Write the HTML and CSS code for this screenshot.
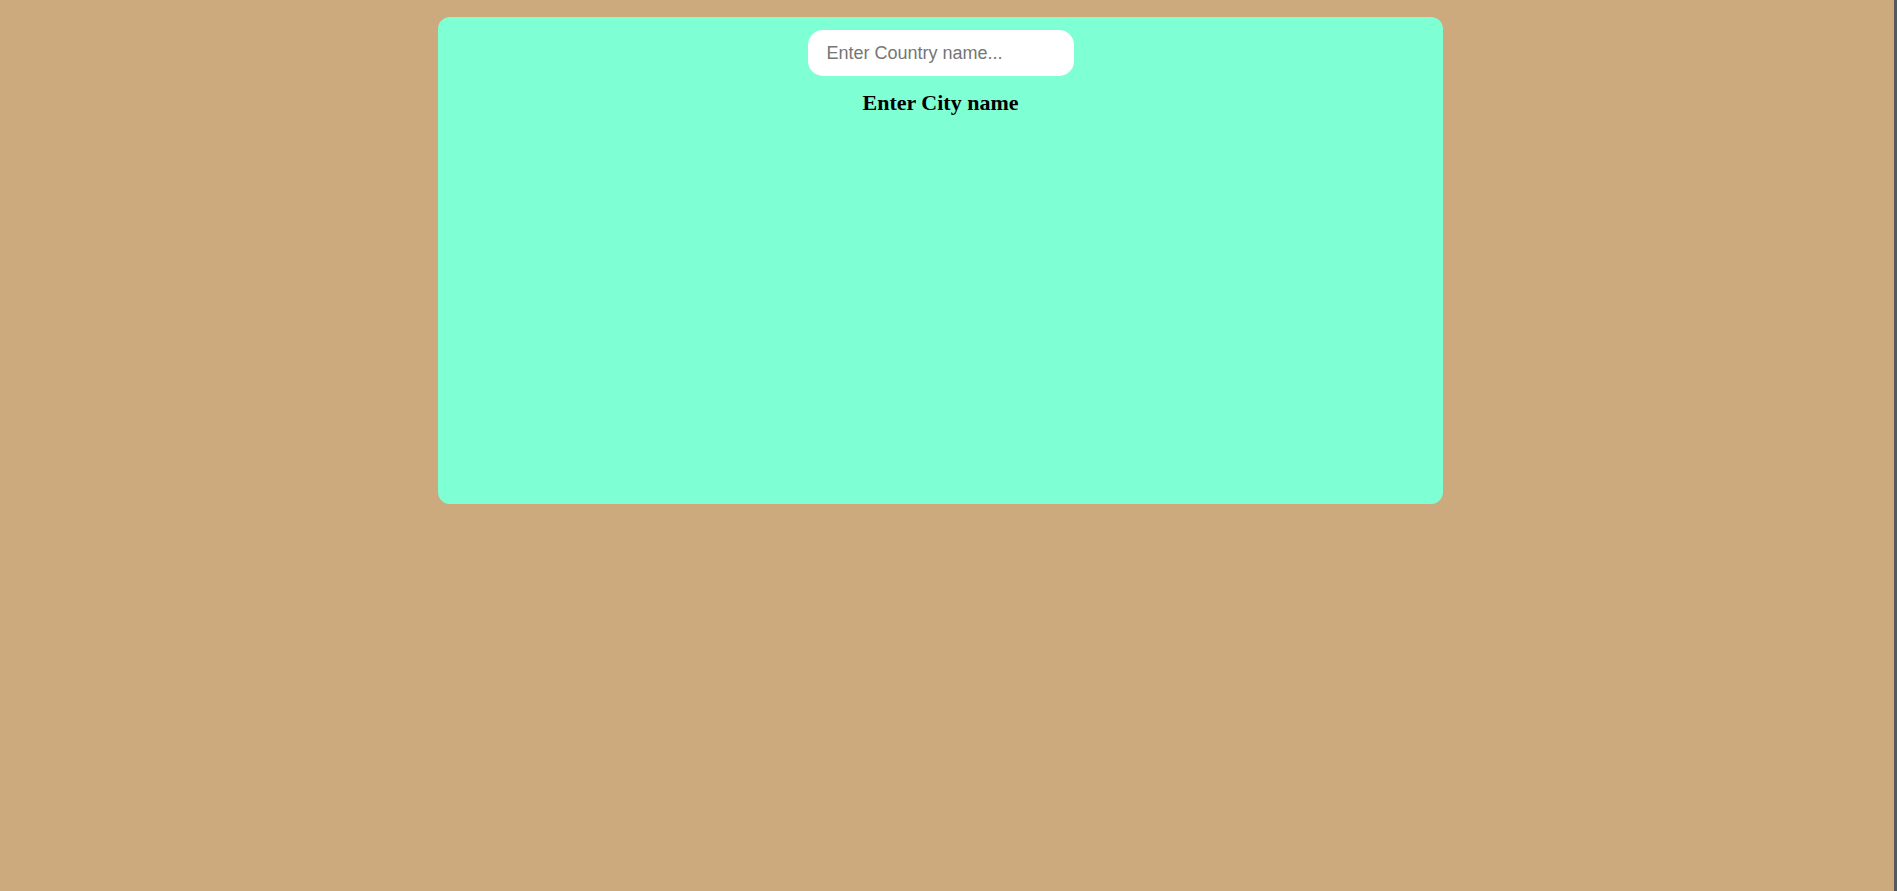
FILE: index.html
```html
<!DOCTYPE html>
<html>
<head>
<meta charset="utf-8">
<link rel="stylesheet" href="styles.css">
<title>Weather</title>
</head>
<body>
<div class="page">
  <div class="card">
    <input class="search" type="text" placeholder="Enter Country name...">
    <h3 class="city">Enter City name</h3>
  </div>
</div>
</body>
</html>
```
FILE: styles.css
```css
html, body {
  margin: 0;
  padding: 0;
  height: 100%;
}
body {
  background: #cdaa7d;
  font-family: "Liberation Serif", "Times New Roman", serif;
}
.page {
  box-sizing: border-box;
  min-height: 100%;
  border-right: 3px solid #55585c;
  padding-top: 17px;
  padding-left: 438px;
}
.card {
  box-sizing: border-box;
  width: 1005px;
  height: 487px;
  background: #7fffd4;
  border-radius: 12px;
  display: flex;
  flex-direction: column;
  align-items: center;
  padding-top: 13px;
}
.search {
  box-sizing: border-box;
  width: 266px;
  height: 46px;
  border: none;
  outline: none;
  border-radius: 15px;
  background: #fff;
  padding: 0 19px;
  font-family: "Liberation Sans", Arial, sans-serif;
  font-size: 18px;
  color: #333;
}
.search::placeholder {
  color: #757575;
}
.city {
  margin: 14px 0 0;
  font-size: 22px;
  font-weight: bold;
  color: #000;
}
```
